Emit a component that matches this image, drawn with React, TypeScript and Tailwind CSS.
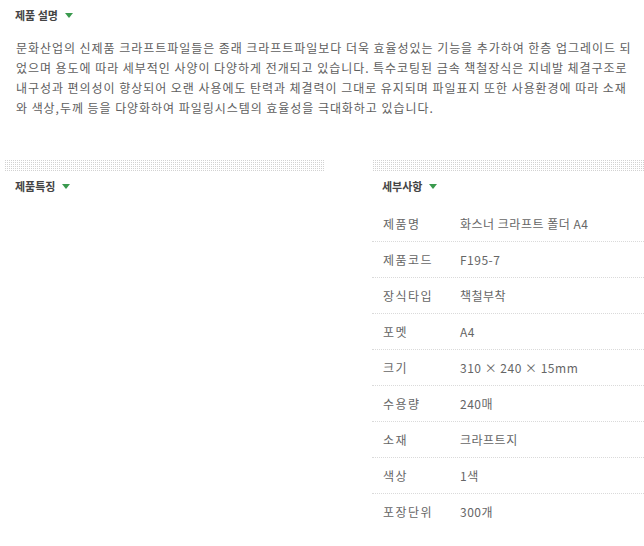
const specs: [string, string][] = [
  ["제품명", "화스너 크라프트 폴더 A4"],
  ["제품코드", "F195-7"],
  ["장식타입", "책철부착"],
  ["포멧", "A4"],
  ["크기", "310 × 240 × 15mm"],
  ["수용량", "240매"],
  ["소재", "크라프트지"],
  ["색상", "1색"],
  ["포장단위", "300개"],
];

function Caret() {
  return (
    <svg width="8" height="5" viewBox="0 0 8 5" className="shrink-0">
      <path d="M0 0h8L4 5z" fill="#3a9a4e" />
    </svg>
  );
}

function Heading({ title }: { title: string }) {
  return (
    <h3 className="h-[30px] flex items-center gap-[7px] text-[11px] font-semibold text-[#444]">
      {title}
      <Caret />
    </h3>
  );
}

function DotBar() {
  return <div className="h-[11px] bg-[conic-gradient(#d2d2d2_25%,#fff_0)] bg-[length:2px_2px]" />;
}

export default function App() {
  return (
    <div className="w-[644px] h-[546px] overflow-hidden bg-white font-['Noto_Sans_CJK_KR',sans-serif] text-[#555]">
      {/* product description */}
      <section className="pl-[15px] pr-[8px]">
        <Heading title="제품 설명" />
        <p className="mt-[8px] pl-[1px] text-[12px] leading-[20px] tracking-[0.95px] text-[#5e5e5e] whitespace-nowrap">
          문화산업의 신제품 크라프트파일들은 종래 크라프트파일보다 더욱 효율성있는 기능을 추가하여 한층 업그레이드 되
          <br />
          었으며 용도에 따라 세부적인 사양이 다양하게 전개되고 있습니다. 특수코팅된 금속 책철장식은 지네발 체결구조로
          <br />
          내구성과 편의성이 향상되어 오랜 사용에도 탄력과 체결력이 그대로 유지되며 파일표지 또한 사용환경에 따라 소재
          <br />
          와 색상,두께 등을 다양화하여 파일링시스템의 효율성을 극대화하고 있습니다.
        </p>
      </section>

      <div className="flex mt-[42px]">
        {/* features */}
        <section className="ml-[4px] w-[320px]">
          <DotBar />
          <div className="pl-[11px]">
            <Heading title="제품특징" />
          </div>
        </section>

        {/* details */}
        <section className="ml-[48px] flex-1">
          <DotBar />
          <div className="pl-[10px]">
            <Heading title="세부사항" />
          </div>
          <ul className="mt-[5px]">
            {specs.map(([k, v], i) => (
              <li
                key={k}
                className={`h-[36px] flex items-center pl-[11px] text-[12px] text-[#666] ${
                  i < specs.length - 1 ? "border-b border-dotted border-[#dadada]" : ""
                }`}
              >
                <span className="w-[77px] shrink-0 tracking-[1.5px]">{k}</span>
                <span className="tracking-[0.5px]">{v}</span>
              </li>
            ))}
          </ul>
        </section>
      </div>
    </div>
  );
}
